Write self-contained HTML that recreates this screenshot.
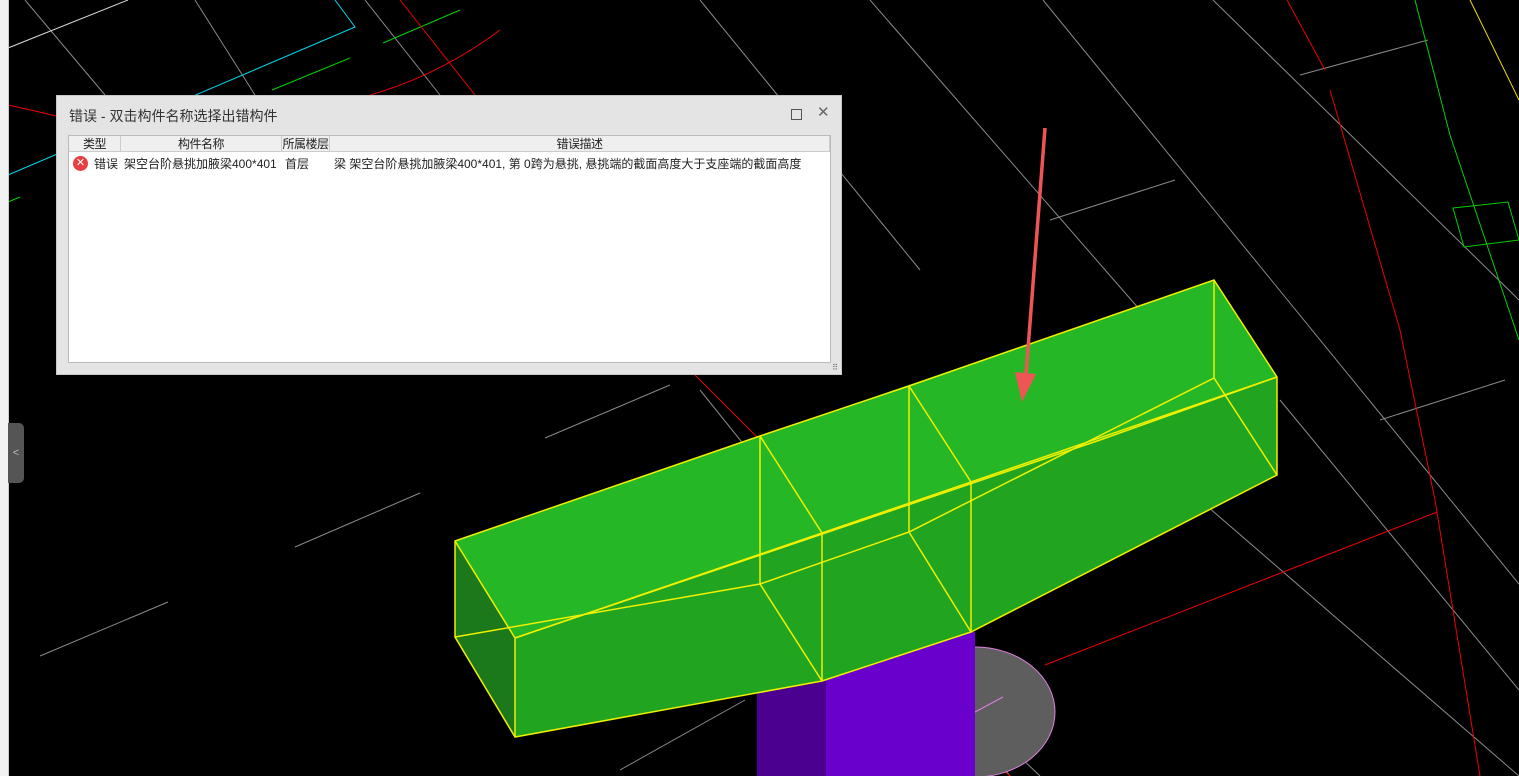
<!DOCTYPE html>
<html><head><meta charset="utf-8"><style>
html,body{margin:0;padding:0;width:1519px;height:776px;overflow:hidden;background:#000;font-family:"Liberation Sans","Noto Sans CJK SC",sans-serif;}
#left{position:absolute;left:0;top:0;width:8px;height:776px;background:#f2f2f2;border-right:1px solid #ccc;}
#tab{position:absolute;left:8px;top:423px;width:16px;height:60px;background:#555;border-radius:0 5px 5px 0;color:#bbb;font-size:11px;line-height:60px;text-align:center;}
#dlg{position:absolute;left:56px;top:95px;width:786px;height:280px;background:#e4e4e4;border:1px solid #c8c8c8;box-sizing:border-box;}
#title{position:absolute;left:12px;top:10px;font-size:14px;color:#333;}
#max{position:absolute;left:734px;top:13px;width:9px;height:9px;border:1px solid #555;}
#cls{position:absolute;left:760px;top:7px;font-size:15px;color:#666;font-weight:300;}
#tbl{position:absolute;left:11px;top:39px;width:763px;height:228px;background:#fff;border:1px solid #bbb;box-sizing:border-box;font-size:12px;color:#222;}
.h{position:absolute;top:0;height:16px;background:#efefef;border-right:1px solid #ccc;border-bottom:1px solid #ccc;text-align:center;line-height:16px;box-sizing:border-box;white-space:nowrap;overflow:visible;letter-spacing:-0.5px;}
.c{position:absolute;top:20px;line-height:16px;white-space:nowrap;}
#ic{position:absolute;left:4px;top:20px;width:15px;height:15px;border-radius:50%;background:#e84040;color:#fff;font-size:11px;line-height:15px;text-align:center;}
#grip{position:absolute;right:3px;bottom:2px;font-size:8px;color:#666;}
</style></head><body>
<svg width="1519" height="776" style="position:absolute;left:0;top:0">
<g stroke="#8a8a8a" stroke-width="1" fill="none">
<line x1="25" y1="0" x2="105" y2="95"/><line x1="195" y1="0" x2="255" y2="95"/>
<line x1="365" y1="0" x2="440" y2="95"/><line x1="700" y1="0" x2="920" y2="270"/>
<line x1="870" y1="0" x2="1140" y2="310"/><line x1="1043" y1="0" x2="1519" y2="584"/>
<line x1="1213" y1="0" x2="1519" y2="300"/>
<line x1="1050" y1="220" x2="1175" y2="180"/>
<line x1="1300" y1="75" x2="1428" y2="40"/><line x1="1380" y1="420" x2="1505" y2="380"/>
<line x1="1200" y1="500" x2="1519" y2="776"/><line x1="1280" y1="400" x2="1519" y2="690"/>
<line x1="960" y1="700" x2="1040" y2="776"/>
<line x1="700" y1="390" x2="1010" y2="776"/><line x1="545" y1="438" x2="670" y2="385"/>
<line x1="295" y1="547" x2="420" y2="493"/><line x1="40" y1="656" x2="168" y2="602"/>
<line x1="620" y1="770" x2="745" y2="700"/>
</g>
<polyline points="8,48 128,0" stroke="#ddd" fill="none"/>
<polyline points="8,175 355,27 335,0" stroke="#00d8e8" fill="none"/>
<line x1="272" y1="90" x2="350" y2="58" stroke="#00d000"/><line x1="383" y1="43" x2="460" y2="10" stroke="#00d000"/>
<line x1="8" y1="202" x2="20" y2="197" stroke="#00d000"/>
<path d="M8,105 Q40,112 56,116" stroke="#e00" fill="none"/>
<path d="M370,95 Q440,75 500,30" stroke="#e00" fill="none"/>
<line x1="400" y1="0" x2="475" y2="95" stroke="#e00"/>
<line x1="695" y1="375" x2="760" y2="440" stroke="#e00"/>
<path d="M1287,0 L1325,70 M1330,90 L1400,330 L1435,500 L1480,776" stroke="#e00" fill="none"/>
<line x1="1045" y1="665" x2="1437" y2="512" stroke="#e00"/>
<line x1="970" y1="740" x2="1010" y2="776" stroke="#e00"/>
<path d="M1415,0 L1450,135 L1519,340" stroke="#00d000" fill="none"/>
<polygon points="1453,208 1508,202 1519,240 1464,247" stroke="#00d000" fill="none"/>
<line x1="1470" y1="0" x2="1519" y2="100" stroke="#e8e000"/>
<ellipse cx="975" cy="712" rx="80" ry="65" fill="#5e5e5e" stroke="#e080e0"/>
<line x1="975" y1="712" x2="1003" y2="697" stroke="#e080e0"/>
<polygon points="757,680 826,680 826,776 757,776" fill="#4b0090"/>
<polygon points="822,681 971,632 975,632 975,776 826,776 826,681" fill="#6a00cc"/>
<polygon points="455,541 1214,280 1277,377 1277,475 971,632 822,681 515,737 455,637" fill="#21a521"/>
<polygon points="455,541 515,638 515,737 455,637" fill="#1b781b"/>
<polygon points="455,541 760,436 909,386 1214,280 1277,377 1100,440 515,638" fill="#25b725"/>
<g stroke="#f0f000" stroke-width="1.5" fill="none">
<polygon points="455,541 760,436 909,386 1214,280 1277,377 1277,475 971,632 822,681 515,737 455,637"/>
<polyline points="455,541 515,638 515,737"/>
<polyline points="515,638 822,533 971,482 1277,377"/>
<polyline points="455,637 760,584 909,532 1214,378 1214,280"/>
<polyline points="1214,378 1277,475"/>
<polyline points="515,638 1100,440 1277,377"/>
<line x1="760" y1="436" x2="760" y2="584"/><line x1="822" y1="533" x2="822" y2="681"/>
<line x1="909" y1="386" x2="909" y2="532"/><line x1="971" y1="482" x2="971" y2="632"/>
<line x1="760" y1="436" x2="822" y2="533"/><line x1="909" y1="386" x2="971" y2="482"/>
<line x1="760" y1="584" x2="822" y2="681"/><line x1="909" y1="532" x2="971" y2="632"/>
</g>
<line x1="1045" y1="128" x2="1026" y2="375" stroke="#f05555" stroke-width="3.5"/>
<polygon points="1015,372 1036,374 1022,402" fill="#f05555"/>
</svg>
<div id="left"></div><div id="tab">&lt;</div>
<div id="dlg">
<div id="title">错误 - 双击构件名称选择出错构件</div>
<div id="max"></div><div id="cls">✕</div>
<div id="tbl">
<div class="h" style="left:0;width:52px">类型</div>
<div class="h" style="left:52px;width:161px">构件名称</div>
<div class="h" style="left:213px;width:48px">所属楼层</div>
<div class="h" style="left:261px;width:500px">错误描述</div>
<div id="ic">✕</div>
<div class="c" style="left:25px">错误</div>
<div class="c" style="left:55px">架空台阶悬挑加腋梁400*401</div>
<div class="c" style="left:216px">首层</div>
<div class="c" style="left:265px">梁 架空台阶悬挑加腋梁400*401, 第 0跨为悬挑, 悬挑端的截面高度大于支座端的截面高度</div>
</div>
<div id="grip">⠿</div>
</div>
</body></html>
